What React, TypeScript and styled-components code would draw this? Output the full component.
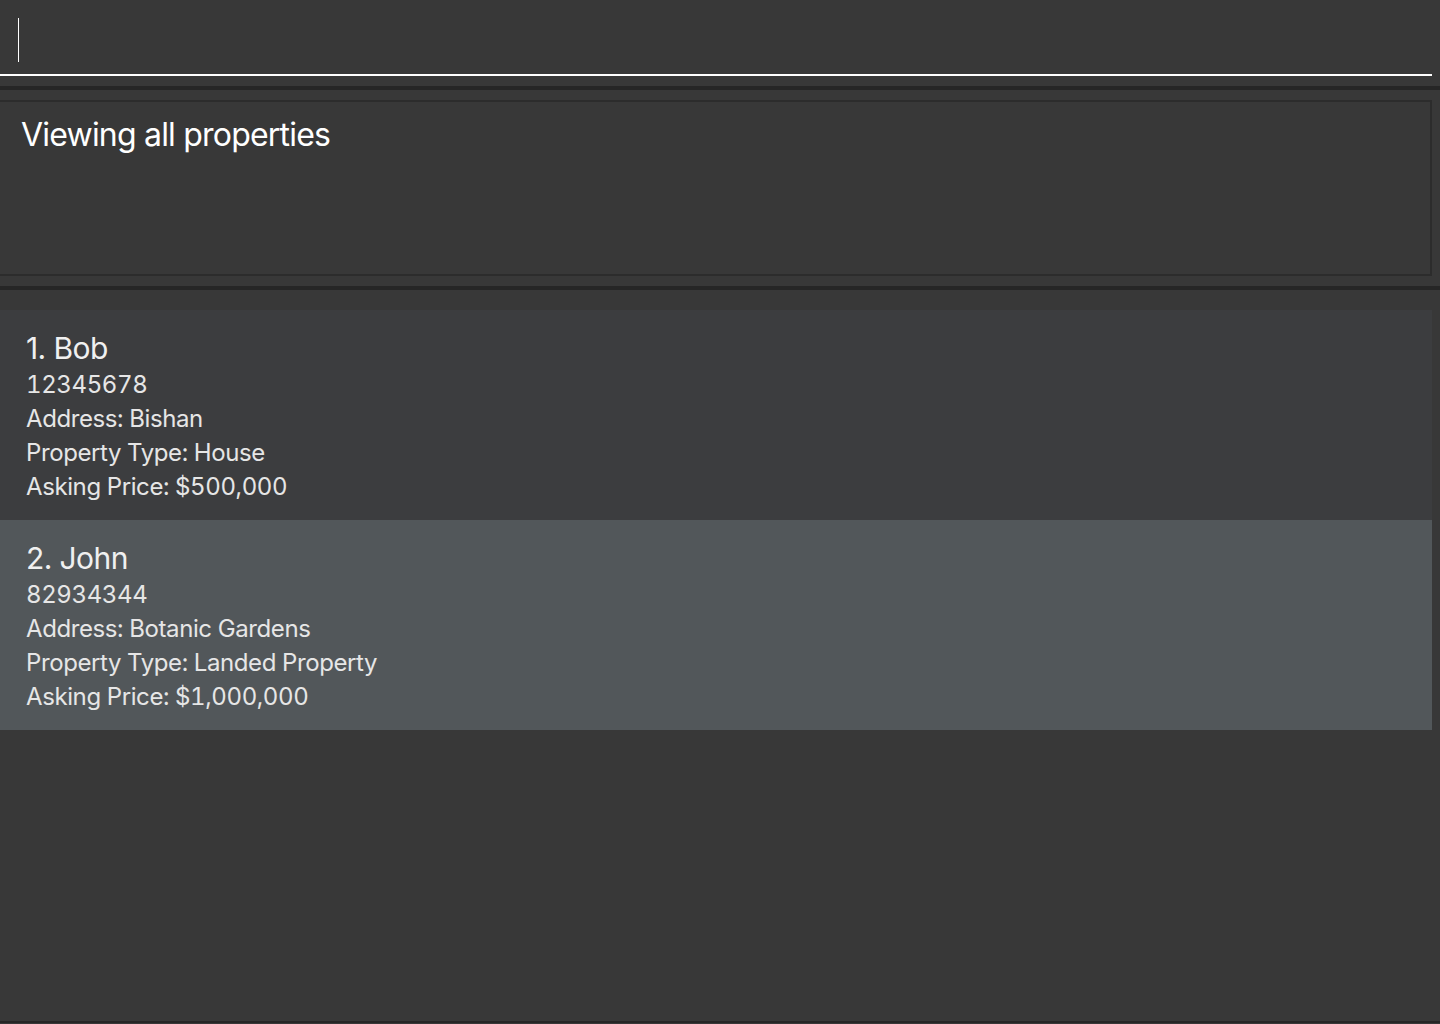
import React from "react";
import styled, { createGlobalStyle } from "styled-components";

const Global = createGlobalStyle`
  html, body { margin: 0; padding: 0; background: #383838; }
  body { font-family: Inter, "Noto Sans", sans-serif; }
  #root { height: 1024px; }
`;

const Page = styled.div`
  height: 1024px;
  display: flex;
  flex-direction: column;
  background: #383838;
  overflow: hidden;
`;

const CommandBox = styled.div`
  width: 1432px;
  height: 76px;
  box-sizing: border-box;
  border-bottom: 2px solid #ffffff;
  display: flex;
  align-items: flex-start;
  padding-left: 18px;
`;

const Caret = styled.div`
  width: 1px;
  height: 44px;
  margin-top: 18px;
  background: #ffffff;
`;

const Divider = styled.div<{ $before: number; $after: number }>`
  height: 4px;
  width: 1440px;
  background: #262626;
  margin-top: ${(p) => p.$before}px;
  margin-bottom: ${(p) => p.$after}px;
`;

const ResultBox = styled.div`
  width: 1432px;
  height: 176px;
  box-sizing: border-box;
  border: 2px solid #2c2c2c;
  border-left: none;
  padding: 13px 0 0 21px;
  color: #ffffff;
  font-size: 32px;
  letter-spacing: -0.8px;
`;

const List = styled.div`
  display: flex;
  flex-direction: column;
  width: 1432px;
  flex: 1;
`;

const Card = styled.div<{ $selected: boolean }>`
  height: 210px;
  box-sizing: border-box;
  padding: 18px 0 0 26px;
  background: ${(p) => (p.$selected ? "#52575a" : "#3c3d3f")};
  display: flex;
  flex-direction: column;
`;

const Name = styled.div`
  font-size: 30px;
  line-height: 40px;
  color: #f0f0f0;
  letter-spacing: -0.6px;
`;

const Field = styled.div`
  font-size: 24px;
  line-height: 34px;
  color: #e6e6e6;
  letter-spacing: -0.4px;
  font-variant-numeric: tabular-nums;
`;

const Spacer = styled.div`
  flex: 1;
`;

const BottomLine = styled.div`
  height: 2px;
  width: 1440px;
  background: #262626;
  margin-bottom: 1px;
`;

const properties = [
  { name: "Bob", phone: "12345678", address: "Bishan", type: "House", price: "$500,000" },
  { name: "John", phone: "82934344", address: "Botanic Gardens", type: "Landed Property", price: "$1,000,000" },
];

export default function App() {
  return (
    <Page>
      <Global />
      <CommandBox>
        <Caret />
      </CommandBox>
      <Divider $before={10} $after={10} />
      <ResultBox>Viewing all properties</ResultBox>
      <Divider $before={10} $after={20} />
      <List>
        {properties.map((p, i) => (
          <Card key={p.name} $selected={i === 1}>
            <Name>
              {i + 1}. {p.name}
            </Name>
            <Field>{p.phone}</Field>
            <Field>Address: {p.address}</Field>
            <Field>Property Type: {p.type}</Field>
            <Field>Asking Price: {p.price}</Field>
          </Card>
        ))}
        <Spacer />
      </List>
      <BottomLine />
    </Page>
  );
}
